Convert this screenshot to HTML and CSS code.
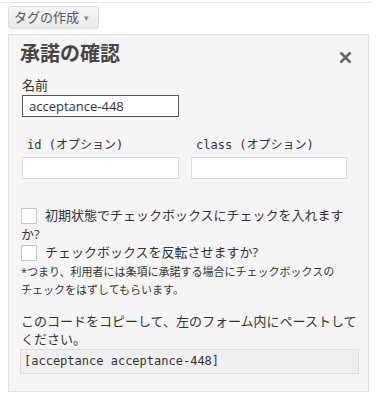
FILE: index.html
```html
<!DOCTYPE html>
<html lang="ja">
<head>
<meta charset="utf-8">
<title>承諾の確認</title>
<link rel="stylesheet" href="styles.css">
</head>
<body>
<div class="topline"></div>
<div class="page">
  <button class="menu-btn" type="button">タグの作成 <span class="caret">▾</span></button>
  <div class="panel">
    <div class="panel-head">
      <h3 class="title">承諾の確認</h3>
      <span class="close" aria-label="閉じる">
        <svg width="13" height="13" viewBox="0 0 13 13"><path d="M1.5 1.5 L11.5 11.5 M11.5 1.5 L1.5 11.5" stroke="#666" stroke-width="2.6" stroke-linecap="butt"/></svg>
      </span>
    </div>
    <div class="field">
      <label class="label">名前</label>
      <div class="input input-name">acceptance-448</div>
    </div>
    <div class="cols">
      <div class="col">
        <div class="mono-label">id (オプション)</div>
        <div class="input"></div>
      </div>
      <div class="col">
        <div class="mono-label">class (オプション)</div>
        <div class="input"></div>
      </div>
    </div>
    <p class="check first"><span class="box"></span>初期状態でチェックボックスにチェックを入れますか?</p>
    <p class="check"><span class="box"></span>チェックボックスを反転させますか?</p>
    <p class="note">*つまり、利用者には条項に承諾する場合にチェックボックスの<br>チェックをはずしてもらいます。</p>
    <p class="copy">このコードをコピーして、左のフォーム内にペーストして<br>ください。</p>
    <div class="code">[acceptance acceptance-448]</div>
  </div>
</div>
</body>
</html>
```

FILE: styles.css
```css
html, body {
  margin: 0;
  padding: 0;
  background: #fff;
}
body {
  font-family: "Open Sans", "Noto Sans CJK JP", sans-serif;
  font-size: 13px;
  color: #333;
}
.topline {
  margin-top: 2px;
  width: 373px;
  border-top: 1px solid #e6e6e6;
}
.page {
  padding-left: 8px;
}
.menu-btn {
  display: flex;
  align-items: center;
  box-sizing: border-box;
  margin: 3px 0 0 0;
  width: 91px;
  height: 23px;
  padding: 0 0 0 5px;
  border: 1px solid #dcdcdc;
  border-radius: 3px;
  background: linear-gradient(#f6f6f6, #e9e9e9);
  font-family: "Open Sans", "Noto Sans CJK JP", sans-serif;
  font-size: 13px;
  color: #555;
  line-height: 1;
}
.caret {
  margin-left: 5px;
  font-size: 9px;
  color: #888;
}
.panel {
  box-sizing: border-box;
  margin-top: 5px;
  width: 361px;
  border: 1px solid #dedede;
  background: #f5f5f5;
  padding: 0 12px 17px 12px;
}
.panel-head {
  display: flex;
  justify-content: space-between;
  align-items: center;
  margin-top: 7px;
  height: 24px;
}
.title {
  margin: 0 0 0 -1px;
  font-size: 20px;
  line-height: 24px;
  font-weight: bold;
  color: #464646;
}
.close {
  display: flex;
  margin: 6px 4px 0 0;
}
.field {
  margin-top: 10px;
  padding-left: 1px;
}
.label {
  display: block;
  line-height: 18px;
  color: #333;
}
.input {
  box-sizing: border-box;
  height: 22px;
  width: 157px;
  margin-top: 1px;
  background: #fff;
  border: 1px solid #dcdcdc;
  padding: 0 6px;
  line-height: 20px;
  font-size: 13px;
  color: #333;
}
.input-name {
  border-color: #555;
}
.cols {
  display: flex;
  gap: 12px;
  margin-top: 19px;
  padding-left: 1px;
}
.col .input {
  margin-top: 3px;
}
.col:last-child .input {
  width: 156px;
}
.mono-label {
  font-family: "DejaVu Sans Mono", "Noto Sans CJK JP", monospace;
  font-size: 12px;
  line-height: 18px;
  padding-left: 5px;
  color: #333;
}
.check {
  margin: -1px 0 0 0;
  line-height: 19px;
  font-size: 13px;
}
.check.first {
  margin-top: 27px;
}
.box {
  display: inline-block;
  box-sizing: border-box;
  width: 16px;
  height: 16px;
  margin-right: 8px;
  vertical-align: -4px;
  background: #fff;
  border: 1px solid #c6c6c6;
}
.note {
  margin: 1px 0 0 0;
  font-size: 11px;
  line-height: 17.5px;
  white-space: nowrap;
}
.copy {
  margin: 14px 0 0 0;
  line-height: 18px;
  white-space: nowrap;
}
.code {
  box-sizing: border-box;
  margin: 1px 0 0 -1px;
  height: 25px;
  width: 339px;
  border: 1px solid #dcdcdc;
  background: #efefef;
  padding: 0 3px;
  font-family: "DejaVu Sans Mono", monospace;
  font-size: 12px;
  line-height: 23px;
  color: #333;
}
```
